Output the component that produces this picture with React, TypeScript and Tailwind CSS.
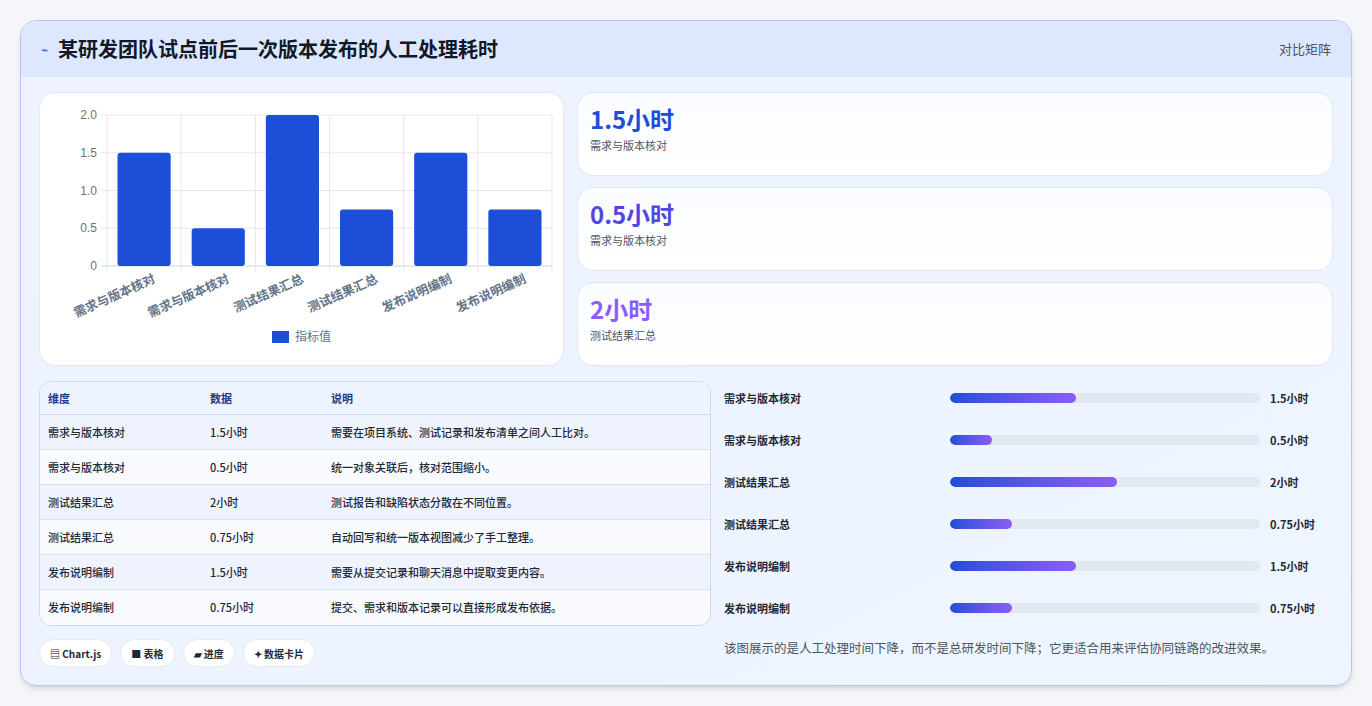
const rows = [
  { k: '需求与版本核对', v: '1.5小时', d: '需要在项目系统、测试记录和发布清单之间人工比对。', n: 1.5, p: 40.6 },
  { k: '需求与版本核对', v: '0.5小时', d: '统一对象关联后，核对范围缩小。', n: 0.5, p: 13.5 },
  { k: '测试结果汇总', v: '2小时', d: '测试报告和缺陷状态分散在不同位置。', n: 2, p: 54 },
  { k: '测试结果汇总', v: '0.75小时', d: '自动回写和统一版本视图减少了手工整理。', n: 0.75, p: 20 },
  { k: '发布说明编制', v: '1.5小时', d: '需要从提交记录和聊天消息中提取变更内容。', n: 1.5, p: 40.6 },
  { k: '发布说明编制', v: '0.75小时', d: '提交、需求和版本记录可以直接形成发布依据。', n: 0.75, p: 20 },
];

const font = { fontFamily: '"Noto Sans CJK SC", "Noto Sans", sans-serif' };

function Chart() {
  const x0 = 67, x1 = 512, y0 = 22, y1 = 173;
  const bw = (x1 - x0) / 6;
  const ys = [0, 0.5, 1, 1.5, 2];
  const yv = (v: number) => y1 - (v / 2) * (y1 - y0);
  return (
    <svg width="524" height="273" className="block">
      {ys.map((v) => (
        <g key={v}>
          <line x1={x0 - 6} x2={x1} y1={yv(v)} y2={yv(v)} stroke={v === 0 ? '#cbd5e1' : '#e5e7eb'} />
          <text x={x0 - 10} y={yv(v) + 4} textAnchor="end" fontSize="12" fill="#6b7280" fontFamily="Liberation Sans, sans-serif">
            {v === 0 ? '0' : v.toFixed(1)}
          </text>
        </g>
      ))}
      {[0, 1, 2, 3, 4, 5, 6].map((i) => (
        <line key={i} x1={x0 + i * bw} x2={x0 + i * bw} y1={y0} y2={y1 + 6} stroke="#e5e7eb" />
      ))}
      {rows.map((r, i) => (
        <g key={i}>
          <rect x={x0 + i * bw + 10.5} y={yv(r.n)} width={bw - 21} height={y1 - yv(r.n)} rx="3" fill="#1d4ed8" />
          <text
            transform={`translate(${x0 + i * bw + bw / 2 + 12},${y1 + 16}) rotate(-24)`}
            textAnchor="end"
            fontSize="12.5"
            fontWeight="600"
            fill="#64748b"
            style={font}
          >
            {r.k}
          </text>
        </g>
      ))}
      <rect x="232" y="238" width="17" height="12" fill="#1d4ed8" />
      <text x="255" y="248" fontSize="12" fill="#64748b" style={font}>指标值</text>
    </svg>
  );
}

export default function App() {
  return (
    <div className="w-[1372px] h-[706px] bg-[#f5f6f9] p-5" style={font}>
      <div className="h-[666px] rounded-2xl border border-[#b9c6ef] bg-gradient-to-br from-[#eef3ff] to-[#eef5ff] overflow-hidden shadow-md">
        <div className="h-14 bg-[#dde8fe] flex items-center justify-between px-5">
          <div className="flex items-center gap-2.5">
            <span className="text-[#2563eb] text-xs">⌁</span>
            <span className="text-[20px] font-bold text-[#111827]">某研发团队试点前后一次版本发布的人工处理耗时</span>
          </div>
          <span className="text-[13px] text-[#4b5563]">对比矩阵</span>
        </div>
        <div className="px-[18px] pt-[15px]">
          <div className="flex gap-[13px]">
            <div className="w-[525px] h-[274px] bg-white rounded-2xl border border-[#e2e8f5]">
              <Chart />
            </div>
            <div className="flex-1 flex flex-col gap-[11px]">
              {[
                ['1.5小时', '需求与版本核对', 'text-[#1d4ed8]'],
                ['0.5小时', '需求与版本核对', 'text-[#4f46e5]'],
                ['2小时', '测试结果汇总', 'text-[#8b5cf6]'],
              ].map(([v, l, c], i) => (
                <div key={i} className="h-[84px] rounded-2xl border border-[#dfe6f7] bg-gradient-to-b from-[#fafcff] to-white px-3 pt-2.5">
                  <div className={`text-[24px] font-bold leading-8 ${c}`}>{v}</div>
                  <div className="text-[11px] text-[#4b5563] mt-0.5">{l}</div>
                </div>
              ))}
            </div>
          </div>
          <div className="flex gap-[13px] mt-[15px]">
            <div className="w-[672px]">
              <div className="rounded-xl border border-[#cfd8ec] overflow-hidden text-[11px] font-medium">
                <div className="flex h-[33px] items-center bg-[#eef4ff] text-[#1e3a8a] font-semibold border-b border-[#cfd8ec]">
                  <div className="w-[170px] pl-2">维度</div>
                  <div className="w-[121px]">数据</div>
                  <div>说明</div>
                </div>
                {rows.map((r, i) => (
                  <div key={i} className={`flex h-[35px] items-center text-[#1f2937] ${i < 5 ? 'border-b border-[#dbe3f1]' : ''} ${i % 2 === 0 ? 'bg-[#eef3fd]' : 'bg-[#f8fafd]'}`}>
                    <div className="w-[170px] pl-2">{r.k}</div>
                    <div className="w-[121px]">{r.v}</div>
                    <div>{r.d}</div>
                  </div>
                ))}
              </div>
              <div className="flex gap-2 mt-[13px] text-[10px] font-semibold text-[#1f2937]">
                {['▤ Chart.js', '■ 表格', '▰ 进度', '✦ 数据卡片'].map((t) => (
                  <span key={t} className="h-7 px-2.5 rounded-full bg-white border border-[#e5e9f2] flex items-center">{t}</span>
                ))}
              </div>
            </div>
            <div className="flex-1 pr-3">
              {rows.map((r, i) => (
                <div key={i} className="flex items-center h-[42px] text-[11px] font-semibold text-[#1f2937]" style={{ marginTop: i === 0 ? -4 : 0 }}>
                  <div className="w-[226px]">{r.k}</div>
                  <div className="w-[310px] h-2.5 rounded-full bg-[#e2e8f0] overflow-hidden">
                    <div className="h-full rounded-full bg-gradient-to-r from-[#1d4ed8] to-[#8b5cf6]" style={{ width: `${r.p}%` }} />
                  </div>
                  <div className="pl-2.5">{r.v}</div>
                </div>
              ))}
              <div className="text-[12.5px] text-[#4b5563] mt-[10px]">该图展示的是人工处理时间下降，而不是总研发时间下降；它更适合用来评估协同链路的改进效果。</div>
            </div>
          </div>
        </div>
      </div>
    </div>
  );
}
